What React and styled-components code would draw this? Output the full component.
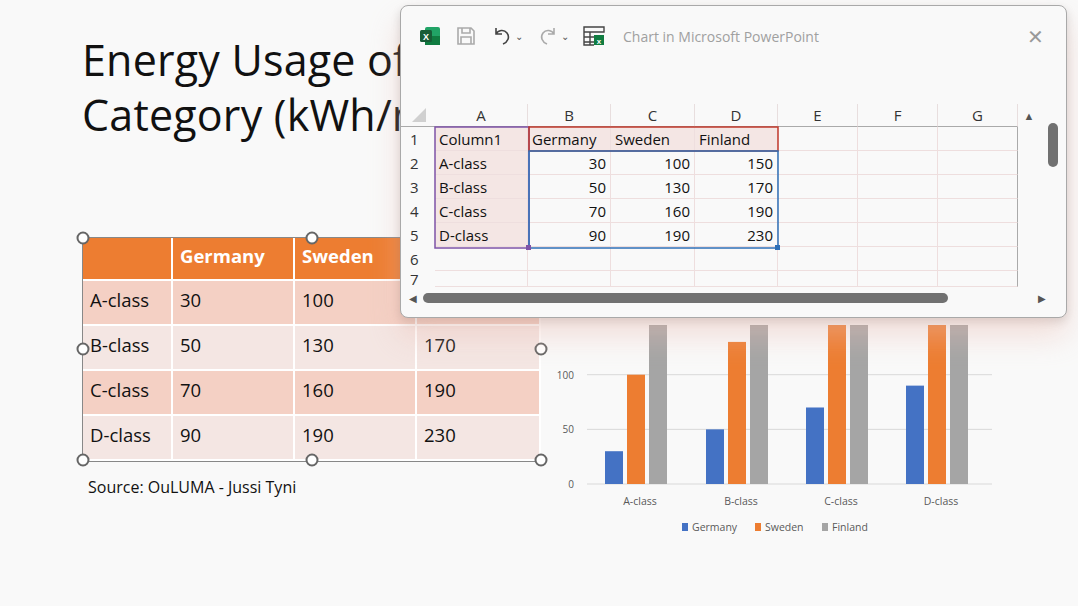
import React from "react";
import styled, { createGlobalStyle } from "styled-components";

const G = createGlobalStyle`
  html,body{margin:0;padding:0;background:#f9f9f9;}
  *{box-sizing:border-box;}
`;
const Page = styled.div`
  position:relative;width:1078px;height:606px;overflow:hidden;background:#f9f9f9;
  font-family:"Open Sans","Noto Sans",sans-serif;
`;
const Slide = styled.div`
  padding:32px 0 0 82px;display:flex;flex-direction:column;
`;
const Title = styled.h1`
  margin:0;font-weight:400;font-size:43px;line-height:55px;color:#111;
  font-family:"Open Sans",sans-serif;letter-spacing:0.2px;
`;
const Body = styled.div`display:flex;margin-top:95px;gap:0;`;
const Left = styled.div`display:flex;flex-direction:column;`;
const TableWrap = styled.div`position:relative;width:458px;border:1px solid #888;`;
const Table = styled.div`
  display:grid;grid-template-columns:90px 122px 122px 124px;
`;
const Cell = styled.div`
  height:${p=>p.h}px;display:flex;align-items:center;padding:0 0 6px 7px;
  font-size:18.5px;color:${p=>p.head?"#fff":"#111"};font-weight:${p=>p.head?700:400};
  background:${p=>p.head?"#ed7d31":p.alt?"#f4d0c4":"#f4e6e3"};
  border-right:2px solid #fff;border-bottom:2px solid #fff;
`;
const Handle = styled.span`
  position:absolute;width:13px;height:13px;border-radius:50%;border:2px solid #666;background:#fff;
  left:${p=>p.x}px;top:${p=>p.y}px;transform:translate(-50%,-50%);
`;
const Source = styled.div`font-size:16px;color:#111;margin:14px 0 0 6px;`;
const ChartBox = styled.svg`margin-top:88px;font-family:"Open Sans",sans-serif;`;

const Win = styled.div`
  position:absolute;left:400px;top:5px;width:667px;height:313px;background:#f9f9f9;
  border:1px solid #a9a9a9;border-radius:8px;
  box-shadow:0 18px 30px rgba(235,190,180,0.45),0 4px 10px rgba(0,0,0,0.15);
  font-family:"Segoe UI","Open Sans",sans-serif;
`;
const TitleBar = styled.div`display:flex;align-items:center;gap:14px;height:60px;padding:0 0 0 18px;`;
const WinTitle = styled.span`font-size:14px;color:#a0a0a0;margin-left:4px;flex:1;`;
const Close = styled.span`font-size:20px;color:#999;margin-right:22px;font-weight:300;`;
const Sheet = styled.div`
  margin-top:38px;display:grid;
  grid-template-columns:34px 93px 83px 84px 83px 80px 80px 80px 22px;
`;
const ColHead = styled.div`
  height:23px;display:flex;align-items:center;justify-content:center;font-size:15px;color:#333;
  border-right:1px solid #e8dede;border-bottom:1px solid #aaa;
`;
const RowNum = styled.div`
  height:24px;display:flex;align-items:center;padding-left:9px;font-size:15px;color:#333;
`;
const SCell = styled.div`
  height:24px;display:flex;align-items:center;padding:0 4px;font-size:15px;color:#111;
  justify-content:${p=>p.num?"flex-end":"flex-start"};
  background:${p=>p.tint?"#f4e6e4":"transparent"};
  border-right:1px solid #eedede;border-bottom:1px solid #eedede;
  ${p=>p.last?"border-right:1px solid #aaa;":""}
`;
const HScroll = styled.div`
  display:flex;align-items:center;gap:6px;padding:4px 0 0 8px;width:645px;
`;
const Thumb = styled.div`height:10px;width:525px;border-radius:5px;background:#717171;`;

const data=[["A-class",30,100,150],["B-class",50,130,170],["C-class",70,160,190],["D-class",90,190,230]];

function Chart(){
  const y0=159, k=1.093;
  const centers=[100,201,301,401];
  return (
    <ChartBox width="460" height="210" viewBox="0 0 460 210">
      {[0,50,100,150].map(v=>(
        <g key={v}>
          <line x1="47" x2="452" y1={y0-v*k} y2={y0-v*k} stroke="#d9d9d9"/>
          <text x="34" y={y0-v*k+4} fontSize="10" fill="#595959" textAnchor="end">{v}</text>
        </g>
      ))}
      {data.map((d,i)=>{
        const c=centers[i];
        return (<g key={i}>
          <rect x={c-35} y={y0-d[1]*k} width="18" height={d[1]*k} fill="#4472c4"/>
          <rect x={c-13} y={y0-d[2]*k} width="18" height={d[2]*k} fill="#ed7d31"/>
          <rect x={c+9} y={y0-d[3]*k} width="18" height={d[3]*k} fill="#a5a5a5"/>
          <text x={c} y={y0+21} fontSize="10.5" fill="#595959" textAnchor="middle">{d[0]}</text>
        </g>);
      })}
      <g fontSize="10.5" fill="#595959">
        <rect x="142" y="198" width="6" height="8" fill="#4472c4"/><text x="152" y="206">Germany</text>
        <rect x="215" y="198" width="6" height="8" fill="#ed7d31"/><text x="225" y="206">Sweden</text>
        <rect x="282" y="198" width="6" height="8" fill="#a5a5a5"/><text x="292" y="206">Finland</text>
      </g>
    </ChartBox>
  );
}

function ExcelIcon(){return(
  <svg width="22" height="20" viewBox="0 0 22 20">
    <rect x="6" y="1" width="15" height="18" rx="2" fill="#21a366"/>
    <rect x="6" y="10" width="15" height="9" fill="#107c41"/>
    <rect x="1" y="4" width="12" height="12" rx="1.5" fill="#185c37"/>
    <text x="7" y="14" fontSize="9" fill="#fff" fontWeight="700" textAnchor="middle" fontFamily="Liberation Sans">X</text>
  </svg>);}
const Ic = styled.span`display:flex;align-items:center;color:#555;font-size:10px;gap:2px;`;

export default function App(){
  const rows=[["Column1","Germany","Sweden","Finland"],...data.map(d=>d.map(String))];
  return (<Page><G/>
    <Slide>
      <Title>Energy Usage of Each<br/>Category (kWh/m²)</Title>
      <Body>
        <Left>
          <TableWrap>
            <Table>
              {["","Germany","Sweden","Finland"].map((h,i)=><Cell key={i} head h={43}>{h}</Cell>)}
              {data.map((d,r)=>d.map((v,c)=><Cell key={r+"-"+c} alt={r%2===0} h={45}>{v}</Cell>))}
            </Table>
            {[[0,0],[229,0],[458,0],[0,111],[458,111],[0,222],[229,222],[458,222]].map(([x,y],i)=><Handle key={i} x={x} y={y}/>)}
          </TableWrap>
          <Source>Source: OuLUMA - Jussi Tyni</Source>
        </Left>
        <Chart/>
      </Body>
    </Slide>
    <Win>
      <TitleBar>
        <ExcelIcon/>
        <svg width="22" height="22" viewBox="0 0 22 22"><path d="M3 3h13l3 3v13H3z M7 3v5h8V3 M6 19v-7h10v7" fill="none" stroke="#aaa" strokeWidth="1.6"/></svg>
        <Ic><svg width="22" height="22" viewBox="0 0 22 22"><path d="M5 3v6h6 M5 9c2-4 8-5 11-1s1 9-4 11" fill="none" stroke="#444" strokeWidth="1.6"/></svg>⌄</Ic>
        <Ic><svg width="22" height="22" viewBox="0 0 22 22"><path d="M17 3v6h-6 M17 9c-2-4-8-5-11-1s-1 9 4 11" fill="none" stroke="#aaa" strokeWidth="1.6"/></svg>⌄</Ic>
        <svg width="22" height="22" viewBox="0 0 22 22"><path d="M1 2h20v5H1z M1 2v18h10 M1 12h10 M7 7v13 M1 17h10" fill="none" stroke="#444" strokeWidth="1.4"/><rect x="11" y="10" width="10" height="10" fill="#107c41"/><text x="16" y="18.5" fontSize="8" fill="#fff" fontWeight="700" textAnchor="middle" fontFamily="Liberation Sans">x</text></svg>
        <WinTitle>Chart in Microsoft PowerPoint</WinTitle>
        <Close>✕</Close>
      </TitleBar>
      <Sheet>
        <ColHead style={{borderRight:"none"}}><svg width="20" height="18"><path d="M18 2v14H4z" fill="#d0d0d0"/></svg></ColHead>
        {["A","B","C","D","E","F","G"].map(c=><ColHead key={c}>{c}</ColHead>)}
        <ColHead style={{border:"none",color:"#555",fontSize:11}}>▲</ColHead>
        {[1,2,3,4,5,6,7].map(r=>(
          <React.Fragment key={r}>
            <RowNum style={r===7?{height:16,overflow:"hidden"}:null}>{r}</RowNum>
            {[0,1,2,3,4,5,6].map(c=>{
              const v=r<=5&&c<4?rows[r-1][c]:"";
              return <SCell key={c} style={r===7?{height:16}:null} num={r>1&&c>0} tint={r<=5&&c<4&&(r===1||c===0)} last={c===6}>{v}</SCell>;
            })}
            <div/>
          </React.Fragment>
        ))}
      </Sheet>
      <HScroll><span style={{fontSize:10,color:"#555"}}>◀</span><Thumb/><span style={{flex:1}}/><span style={{fontSize:10,color:"#555"}}>▶</span></HScroll>
      <svg style={{position:"absolute",left:33,top:120}} width="380" height="126">
        <rect x="1" y="1" width="94" height="121" fill="none" stroke="#7e53a7" strokeWidth="1.5"/>
        <rect x="95" y="1" width="249" height="24" fill="none" stroke="#c0392b" strokeWidth="1.5"/>
        <rect x="95" y="25" width="249" height="97" fill="none" stroke="#2e6fb7" strokeWidth="1.5"/>
        <rect x="341" y="119" width="5" height="5" fill="#2e6fb7"/>
        <rect x="92" y="119" width="5" height="5" fill="#7e53a7"/>
      </svg>
      <div style={{position:"absolute",left:647,top:117,width:10,height:44,borderRadius:5,background:"#717171"}}/>
    </Win>
  </Page>);
}
